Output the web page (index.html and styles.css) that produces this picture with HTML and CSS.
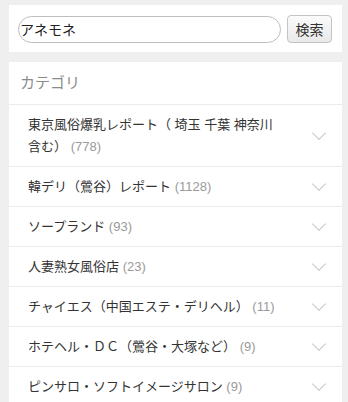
FILE: index.html
```html
<!DOCTYPE html>
<html>
<head>
<meta charset="utf-8">
<title>カテゴリ</title>
<link rel="stylesheet" href="styles.css">
</head>
<body>
	<form class="searchbar">
		<input type="text" class="searchbox" value="アネモネ">
		<button type="button" class="searchbtn">検索</button>
	</form>

	<div class="catbox">
		<div class="cathead">カテゴリ</div>
		<ul class="catlist">
			<li><span class="catname">東京風俗爆乳レポート（ 埼玉 千葉 神奈川含む） <span class="count">(778)</span></span><span class="chev"></span></li>
			<li><span class="catname">韓デリ（鶯谷）レポート <span class="count">(1128)</span></span><span class="chev"></span></li>
			<li><span class="catname">ソープランド <span class="count">(93)</span></span><span class="chev"></span></li>
			<li><span class="catname">人妻熟女風俗店 <span class="count">(23)</span></span><span class="chev"></span></li>
			<li><span class="catname">チャイエス（中国エステ・デリヘル） <span class="count">(11)</span></span><span class="chev"></span></li>
			<li><span class="catname">ホテヘル・ＤＣ（鶯谷・大塚など） <span class="count">(9)</span></span><span class="chev"></span></li>
			<li><span class="catname">ピンサロ・ソフトイメージサロン <span class="count">(9)</span></span><span class="chev"></span></li>
		</ul>
	</div>
</body>
</html>
```
FILE: styles.css
```css
body {
	margin: 0;
	padding: 5px 6px 0 9px;
	background: #efefef;
	font-family: "Liberation Sans", "Noto Sans CJK JP", sans-serif;
	color: #333;
}
.searchbar {
	display: flex;
	align-items: center;
	gap: 6px;
	margin: 0 0 10px 0;
	padding: 10px 10px 9px 9px;
	background: #fff;
}
.searchbox {
	flex: 1;
	min-width: 0;
	box-sizing: border-box;
	height: 27px;
	margin: 0;
	padding: 0 8px 0 1px;
	border: 1px solid #bdbdbd;
	border-radius: 14px;
	font: 14px "Liberation Sans", "Noto Sans CJK JP", sans-serif;
	color: #222;
	outline: 0;
}
.searchbtn {
	box-sizing: border-box;
	width: 45px;
	height: 28px;
	padding: 0;
	border: 1px solid #c4c4c4;
	border-radius: 4px;
	background: linear-gradient(#fbfbfb, #e9e9e9);
	font: 14px "Noto Sans CJK JP", sans-serif;
	color: #333;
}
.catbox {
	background: #fff;
}
.cathead {
	height: 42px;
	line-height: 42px;
	padding-left: 11px;
	border-bottom: 1px solid #ebebeb;
	font-size: 15px;
	color: #8a8a8a;
}
.catlist {
	list-style: none;
	margin: 0;
	padding: 0;
}
.catlist li {
	display: flex;
	align-items: center;
	padding: 9px 15px 8px 19px;
	border-bottom: 1px solid #ebebeb;
	font-size: 13px;
	line-height: 22px;
}
.catname {
	flex: 1;
	padding-right: 36px;
}
.count {
	color: #9a9a9a;
}
.chev {
	width: 9px;
	height: 9px;
	margin: 0 3px 6px 0;
	border-right: 1px solid #c8c8c8;
	border-bottom: 1px solid #c8c8c8;
	transform: rotate(45deg);
}
```
